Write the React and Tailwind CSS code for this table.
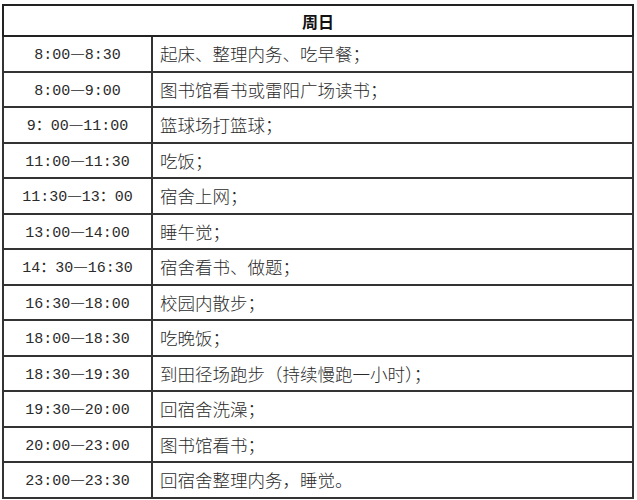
import React from 'react';

const rows = [
  ['8:00', '8:30', '起床、整理内务、吃早餐；'],
  ['8:00', '9:00', '图书馆看书或雷阳广场读书；'],
  ['9：00', '11:00', '篮球场打篮球；'],
  ['11:00', '11:30', '吃饭；'],
  ['11:30', '13：00', '宿舍上网；'],
  ['13:00', '14:00', '睡午觉；'],
  ['14：30', '16:30', '宿舍看书、做题；'],
  ['16:30', '18:00', '校园内散步；'],
  ['18:00', '18:30', '吃晚饭；'],
  ['18:30', '19:30', '到田径场跑步（持续慢跑一小时）；'],
  ['19:30', '20:00', '回宿舍洗澡；'],
  ['20:00', '23:00', '图书馆看书；'],
  ['23:00', '23:30', '回宿舍整理内务，睡觉。'],
];

export default function App() {
  return (
    <div className="bg-white w-[637px] h-[500px] pt-[4px] pl-[2px] text-[#2b2b2b]">
      {/* SCHEDULE TABLE */}
      <table className="w-[632px] border-collapse border-2 border-[#111] table-fixed">
        <colgroup>
          <col className="w-[149px]" />
          <col />
        </colgroup>
        <thead>
          <tr className="h-[31px]">
            <th
              colSpan={2}
              className="border-2 border-[#222] text-[16px] font-bold text-[#111] font-['Noto_Sans_CJK_SC',sans-serif]"
            >
              周日
            </th>
          </tr>
        </thead>
        <tbody>
          {rows.map(([from, to, text]) => (
            <tr key={from + to} className="h-[35.5px]">
              <td className="border-2 border-[#333] text-center text-[15px] font-['Liberation_Mono','Noto_Sans_CJK_SC',monospace] leading-none whitespace-nowrap">
                {from}
                <span className="font-['Noto_Sans_CJK_SC',sans-serif] text-[16.5px] font-light">—</span>
                {to}
              </td>
              <td className="border-2 border-[#333] pl-[7px] text-[17.5px] font-['Noto_Sans_CJK_SC',sans-serif] font-light leading-none">
                {text}
              </td>
            </tr>
          ))}
        </tbody>
      </table>
    </div>
  );
}
